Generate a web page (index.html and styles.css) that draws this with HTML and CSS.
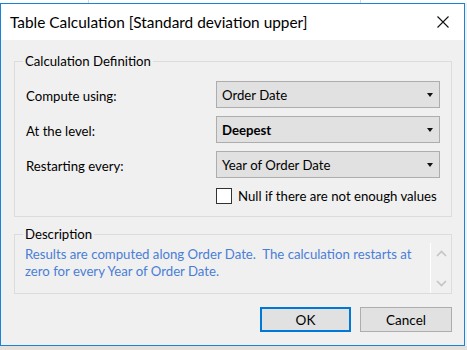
FILE: index.html
```html
<!DOCTYPE html>
<html>
<head>
<meta charset="utf-8">
<link rel="stylesheet" href="styles.css">
</head>
<body>
<div class="topstrip"></div>
<div class="window">
  <div class="titlebar">
    <span class="title">Table Calculation [Standard deviation upper]</span>
    <svg class="close" width="12" height="12" viewBox="0 0 12 12"><path d="M0.5 0.5 L11.5 11.5 M11.5 0.5 L0.5 11.5" stroke="#111" stroke-width="1.1" fill="none"/></svg>
  </div>
  <div class="body">
    <fieldset class="group def">
      <legend>Calculation Definition</legend>
      <div class="form">
        <div class="label">Compute using:</div>
        <div class="combo"><span>Order Date</span><i class="arrow"></i></div>
        <div class="label">At the level:</div>
        <div class="combo"><span class="bold">Deepest</span><i class="arrow"></i></div>
        <div class="label">Restarting every:</div>
        <div class="combo"><span>Year of Order Date</span><i class="arrow"></i></div>
        <div></div>
        <label class="check"><span class="box"></span><span>Null if there are not enough values</span></label>
      </div>
    </fieldset>
    <fieldset class="group desc">
      <legend>Description</legend>
      <div class="descrow">
        <div class="desctext">Results are computed along Order Date.&nbsp; The calculation restarts at zero for every Year of Order Date.</div>
        <div class="scroll">
          <svg width="11" height="7" viewBox="0 0 11 7"><path d="M1 6 L5.5 1.5 L10 6" stroke="#c4c4c4" stroke-width="1.6" fill="none"/></svg>
          <svg width="11" height="7" viewBox="0 0 11 7"><path d="M1 1 L5.5 5.5 L10 1" stroke="#c4c4c4" stroke-width="1.6" fill="none"/></svg>
        </div>
      </div>
    </fieldset>
    <div class="buttons">
      <button class="btn ok">OK</button>
      <button class="btn">Cancel</button>
    </div>
  </div>
</div>
<div class="bottomstrip"></div>
</body>
</html>
```
FILE: styles.css
```css
html, body {
  margin: 0;
  padding: 0;
}
body {
  width: 467px;
  height: 350px;
  overflow: hidden;
  background: #f0f0f0;
  font-family: Lato, "Liberation Sans", sans-serif;
  font-size: 13.2px;
  color: #000;
}
.topstrip {
  height: 3px;
  background:
    linear-gradient(#d6d6d6, #d6d6d6) 88px 0 / 1px 3px no-repeat,
    linear-gradient(#d6d6d6, #d6d6d6) 360px 0 / 1px 3px no-repeat,
    #ffffff;
}
.window {
  width: 463px;
  height: 341px;
  border: 1px solid #1883d7;
  background: #f0f0f0;
  display: flex;
  flex-direction: column;
}
.titlebar {
  height: 36px;
  background: #fff;
  display: flex;
  align-items: center;
  justify-content: space-between;
  padding: 0 15px 0 9px;
  flex: none;
}
.title {
  font-size: 15.4px;
  line-height: 16px;
}
.close {
  display: block;
}
.body {
  flex: 1;
  padding: 0 12px 0 13px;
}
.group {
  margin: 0;
  padding: 0;
  border: 1px solid #dcdcdc;
  min-width: 0;
}
.group legend {
  margin-left: 8px;
  padding: 0 2px;
  line-height: 16px;
  height: 16px;
}
.def {
  margin-top: 13px;
  padding: 12px 10px 13px 11px;
}
.def legend {
  margin-left: -3px;
}
.form {
  display: grid;
  grid-template-columns: 190px 224px;
  grid-template-rows: 27px 27px 27px auto;
  row-gap: 8px;
  align-items: center;
}
.label {
  padding-top: 2px;
}
.form > .check {
  margin-top: 2px;
  height: 15px;
}
.combo {
  height: 25px;
  border: 1px solid #adadad;
  background: #e1e1e1;
  display: flex;
  align-items: center;
  justify-content: space-between;
  padding: 0 6px 0 5px;
}
.bold {
  font-weight: bold;
}
.arrow {
  width: 0;
  height: 0;
  border-left: 3.5px solid transparent;
  border-right: 3.5px solid transparent;
  border-top: 4px solid #111;
}
.check {
  display: flex;
  align-items: center;
  gap: 6px;
  align-self: start;
  white-space: nowrap;
}
.box {
  width: 14px;
  height: 14px;
  border: 1px solid #333;
  background: #fff;
  flex: none;
}
.desc {
  margin-top: 9px;
}
.descrow {
  display: flex;
  height: 51px;
}
.desctext {
  flex: 1;
  color: #4a7ed6;
  padding: 4px 8px 0 10px;
  line-height: 17px;
}
.scroll {
  width: 21px;
  border-left: 1px solid #fff;
  margin-top: 1px;
  display: flex;
  flex-direction: column;
  align-items: center;
  justify-content: space-between;
  padding: 7px 0 6px;
  box-sizing: border-box;
}
.scroll svg {
  display: block;
}
.buttons {
  display: flex;
  justify-content: flex-end;
  gap: 9px;
  margin-top: 13px;
}
.btn {
  font-family: inherit;
  font-size: 13.5px;
  color: #000;
  width: 92px;
  height: 25px;
  border: 1px solid #adadad;
  background: #e1e1e1;
  padding: 0;
  margin: 0;
}
.btn.ok {
  width: 91px;
  border: 2px solid #0078d7;
}
.bottomstrip {
  height: 5px;
  background: #e4e1dc;
}
```
